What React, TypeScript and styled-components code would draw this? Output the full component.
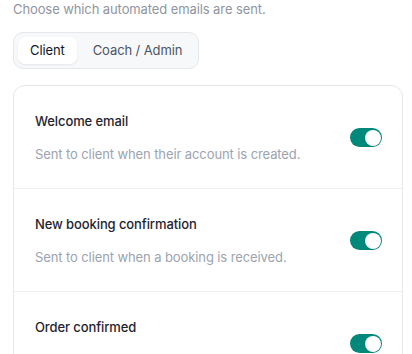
import React, { useState } from 'react';
import styled, { createGlobalStyle } from 'styled-components';

const GlobalStyle = createGlobalStyle`
  html, body {
    margin: 0;
    padding: 0;
    background: #ffffff;
  }
  body {
    font-family: Inter, 'Noto Sans', 'Liberation Sans', sans-serif;
    letter-spacing: -0.1px;
    -webkit-font-smoothing: antialiased;
  }
`;

type EmailSetting = {
    id: string;
    title: string;
    description: string;
};

const clientEmails: EmailSetting[] = [
    {id: 'welcome', title: 'Welcome email', description: 'Sent to client when their account is created.'},
    {id: 'booking', title: 'New booking confirmation', description: 'Sent to client when a booking is received.'},
    {id: 'order', title: 'Order confirmed', description: 'Sent to client when their order has been confirmed.'},
];

const tabs = ['Client', 'Coach / Admin'];

export default function App() {
    const [activeTab, setActiveTab] = useState('Client');
    const [enabled, setEnabled] = useState<Record<string, boolean>>({
        welcome: true,
        booking: true,
        order: true,
    });

    const toggle = (id: string) => setEnabled(prev => ({...prev, [id]: !prev[id]}));

    return (
        <>
            <GlobalStyle/>
            <StyledPage>
                <Intro>Choose which automated emails are sent.</Intro>

                <TabList>
                    {tabs.map(tab => (
                        <Tab key={tab} active={tab === activeTab} onClick={() => setActiveTab(tab)}>
                            {tab}
                        </Tab>
                    ))}
                </TabList>

                <Card>
                    {clientEmails.map(email => (
                        <Row key={email.id}>
                            <RowText>
                                <RowTitle>{email.title}</RowTitle>
                                <RowDescription>{email.description}</RowDescription>
                            </RowText>
                            <Switch
                                on={!!enabled[email.id]}
                                onClick={() => toggle(email.id)}
                                aria-label={email.title}
                            >
                                <Knob on={!!enabled[email.id]}/>
                            </Switch>
                        </Row>
                    ))}
                </Card>
            </StyledPage>
        </>
    );
}

const StyledPage = styled.div`
  padding: 0 9px 0 13px;
`

const Intro = styled.p`
  margin: 0 0 14px 0;
  font-size: 13px;
  line-height: 18px;
  color: #8f95a0;
`

const TabList = styled.div`
  display: inline-flex;
  gap: 4px;
  padding: 4px;
  background: #f7f8fa;
  border: 1px solid #e5e7eb;
  border-radius: 10px;
  margin-bottom: 16px;
`

const Tab = styled.button.withConfig({
    shouldForwardProp: prop => prop !== 'active',
})<{ active: boolean }>`
  font-family: inherit;
  letter-spacing: inherit;
  font-size: 13px;
  line-height: 19px;
  padding: 4px 12px;
  border: none;
  border-radius: 7px;
  cursor: pointer;
  background: ${props => props.active ? '#ffffff' : 'transparent'};
  color: ${props => props.active ? '#111827' : '#4b5563'};
  box-shadow: ${props => props.active ? '0 1px 2px rgba(16, 24, 40, 0.08)' : 'none'};
`

const Card = styled.div`
  border: 1px solid #e5e7eb;
  border-radius: 12px;
  background: #ffffff;
  overflow: hidden;
`

const Row = styled.div`
  display: flex;
  align-items: center;
  justify-content: space-between;
  padding: 26px 20px 25px 21px;

  & + & {
    border-top: 1px solid #eef0f3;
  }
`

const RowText = styled.div`
  display: flex;
  flex-direction: column;
  gap: 15px;
`

const RowTitle = styled.div`
  font-size: 13px;
  font-weight: 500;
  line-height: 18px;
  color: #1f2430;
`

const RowDescription = styled.div`
  font-size: 13px;
  line-height: 18px;
  color: #9ca3af;
`

const Switch = styled.button.withConfig({
    shouldForwardProp: prop => prop !== 'on',
})<{ on: boolean }>`
  position: relative;
  flex-shrink: 0;
  width: 32px;
  height: 19px;
  padding: 0;
  border: none;
  border-radius: 999px;
  cursor: pointer;
  background: ${props => props.on ? '#00897b' : '#d1d5db'};
`

const Knob = styled.span.withConfig({
    shouldForwardProp: prop => prop !== 'on',
})<{ on: boolean }>`
  position: absolute;
  top: 1.5px;
  left: ${props => props.on ? '14.5px' : '1.5px'};
  width: 16px;
  height: 16px;
  border-radius: 50%;
  background: #ffffff;
  box-shadow: 0 1px 2px rgba(0, 0, 0, 0.15);
`
